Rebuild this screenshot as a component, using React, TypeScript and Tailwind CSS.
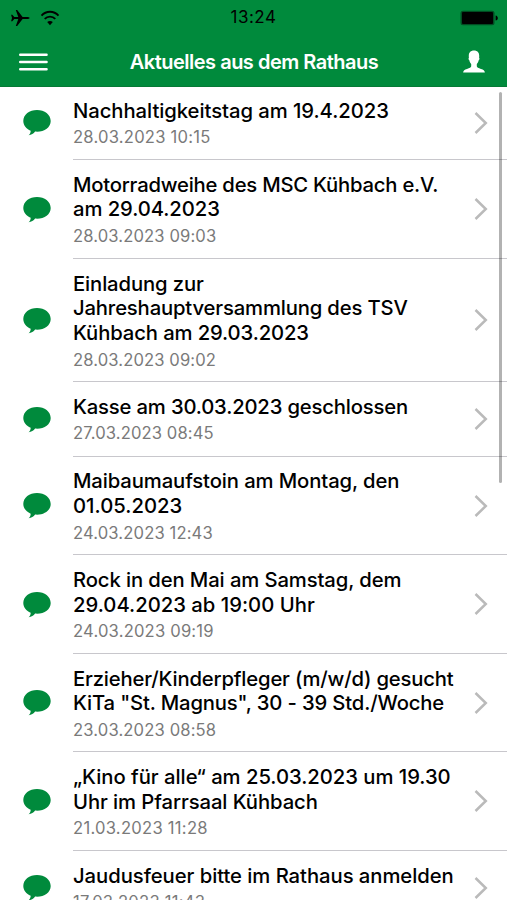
type Line = { text: string; tracking: string };
type Item = { height: string; pad: string; lines: Line[]; date: string; dateTracking: string };

const items: Item[] = [
  {
    height: "h-[74px]",
    pad: "pt-[13px]",
    lines: [{ text: "Nachhaltigkeitstag am 19.4.2023", tracking: "tracking-[-0.05px]" }],
    date: "28.03.2023 10:15",
    dateTracking: "tracking-[0.22px]",
  },
  {
    height: "h-[99px]",
    pad: "pt-[12.500px]",
    lines: [
      { text: "Motorradweihe des MSC Kühbach e.V.", tracking: "tracking-[-0.22px]" },
      { text: "am 29.04.2023", tracking: "tracking-[-0.07px]" },
    ],
    date: "28.03.2023 09:03",
    dateTracking: "tracking-[0.12px]",
  },
  {
    height: "h-[123px]",
    pad: "pt-[12.500px]",
    lines: [
      { text: "Einladung zur", tracking: "tracking-[-0.12px]" },
      { text: "Jahreshauptversammlung des TSV", tracking: "tracking-[-0.16px]" },
      { text: "Kühbach am 29.03.2023", tracking: "tracking-[-0.12px]" },
    ],
    date: "28.03.2023 09:02",
    dateTracking: "tracking-[0.11px]",
  },
  {
    height: "h-[75px]",
    pad: "pt-[13px]",
    lines: [{ text: "Kasse am 30.03.2023 geschlossen", tracking: "tracking-[-0.17px]" }],
    date: "27.03.2023 08:45",
    dateTracking: "tracking-[0.12px]",
  },
  {
    height: "h-[98px]",
    pad: "pt-[12.400px]",
    lines: [
      { text: "Maibaumaufstoin am Montag, den", tracking: "tracking-[-0.11px]" },
      { text: "01.05.2023", tracking: "tracking-[0.02px]" },
    ],
    date: "24.03.2023 12:43",
    dateTracking: "tracking-[0.13px]",
  },
  {
    height: "h-[99px]",
    pad: "pt-[13px]",
    lines: [
      { text: "Rock in den Mai am Samstag, dem", tracking: "tracking-[-0.11px]" },
      { text: "29.04.2023 ab 19:00 Uhr", tracking: "tracking-[0.01px]" },
    ],
    date: "24.03.2023 09:19",
    dateTracking: "tracking-[0.19px]",
  },
  {
    height: "h-[98px]",
    pad: "pt-[12.500px]",
    lines: [
      { text: "Erzieher/Kinderpfleger (m/w/d) gesucht", tracking: "tracking-[-0.17px]" },
      { text: 'KiTa "St. Magnus", 30 - 39 Std./Woche', tracking: "tracking-[-0.15px]" },
    ],
    date: "23.03.2023 08:58",
    dateTracking: "tracking-[0.14px]",
  },
  {
    height: "h-[99px]",
    pad: "pt-[13px]",
    lines: [
      { text: "„Kino für alle“ am 25.03.2023 um 19.30", tracking: "tracking-[-0.03px]" },
      { text: "Uhr im Pfarrsaal Kühbach", tracking: "tracking-[-0.08px]" },
    ],
    date: "21.03.2023 11:28",
    dateTracking: "tracking-[0.26px]",
  },
  {
    height: "h-[74px]",
    pad: "pt-[13px]",
    lines: [{ text: "Jaudusfeuer bitte im Rathaus anmelden", tracking: "tracking-[-0.05px]" }],
    date: "17.03.2023 11:43",
    dateTracking: "tracking-[0.24px]",
  },
];

function Airplane() {
  return (
    <svg width="20" height="18" viewBox="0 0 20 18" className="shrink-0">
      <path
        d="M19.6 9c0 .8-1.400 1.100-2.600 1.100h-4.400L7.200 17H5.800l2.500-6.900H4.300L2.300 12.200H1.100L2 9l-.9-3.200h1.200l2 2.100h4L5.800 1h1.400l5.400 6.900H17c1.200 0 2.600.3 2.600 1.100z"
        fill="#000"
      />
    </svg>
  );
}

function Wifi() {
  return (
    <svg width="20" height="16" viewBox="0 0 20 16" className="shrink-0" fill="none" stroke="#000">
      <path d="M1.500 5.600C6.200.5 13.800.5 18.500 5.600" strokeWidth="1.900" />
      <path d="M4.700 8.900c3-3.100 7.600-3.100 10.600 0" strokeWidth="1.900" />
      <path d="M10 15.200 7.200 12.100c1.600-1.500 4-1.500 5.600 0z" fill="#000" stroke="none" />
    </svg>
  );
}

function Battery() {
  return (
    <svg width="39" height="16" viewBox="0 0 39 16" className="shrink-0">
      <rect x="0.500" y="0.700" width="34" height="14.500" rx="2.500" fill="#000" fillOpacity="0.45" />
      <rect x="2" y="2" width="31" height="12" rx="1" fill="#000" />
      <path d="M35.600 5.400c1.500.3 2.200 1.300 2.200 2.600s-.7 2.300-2.200 2.600z" fill="#000" />
    </svg>
  );
}

function Hamburger() {
  return (
    <svg width="29" height="18" viewBox="0 0 29 18" className="block shrink-0">
      <path
        d="M1.200 1.800h26.400M1.200 9h26.400M1.200 16.200h26.400"
        fill="none"
        stroke="#fff"
        strokeWidth="2.400"
        strokeLinecap="round"
      />
    </svg>
  );
}

function Person() {
  return (
    <svg width="22" height="23" viewBox="0 0 22 23" className="shrink-0">
      <path
        d="M11 .5c3.400 0 5.200 2.100 5.200 5.300 0 .8 0 1.400-.1 1.900.6.400.4 1.900-.4 2.500-.4 1.700-1.100 2.900-1.900 3.700v2.300c0 1.200 1.700 1.900 4.200 2.700 2.500.8 3.600 1.600 3.900 3.500H.1c.3-1.900 1.400-2.700 3.900-3.500 2.500-.8 4.200-1.500 4.200-2.700v-2.300c-.8-.8-1.500-2-1.900-3.700-.8-.6-1-2.100-.4-2.500-.1-.5-.1-1.100-.1-1.900C5.800 2.600 7.600.5 11 .5z"
        fill="#fff"
      />
    </svg>
  );
}

function Bubble() {
  return (
    <svg width="28" height="26" viewBox="0 0 28 26" className="shrink-0">
      <path
        d="M14 0C21.600 0 27.700 4.700 27.700 10.900S21.600 21.700 14 21.700c-.7 0-1.300 0-1.900-.1-1.500 2-3.700 3.500-6.500 3.600 1.200-1 2-2.500 2.100-4.500C3.300 18.700.3 15.100.3 10.900.3 4.700 6.400 0 14 0z"
        fill="#008a3c"
      />
    </svg>
  );
}

function Chevron() {
  return (
    <svg width="14" height="22" viewBox="0 0 14 22" className="shrink-0">
      <path d="M1.500 1 11.800 11 1.500 21" fill="none" stroke="#bababa" strokeWidth="2.500" />
    </svg>
  );
}

export default function App() {
  return (
    <div className="relative flex h-[900px] w-[507px] flex-col overflow-hidden bg-white font-['Inter','Liberation_Sans',sans-serif]">
      <header className="flex h-[87px] shrink-0 flex-col border-b border-[#067a36] bg-[#008a3c]">
        <div className="grid h-[35px] grid-cols-3 items-center">
          <div className="flex items-center gap-[10px] pl-[10px]">
            <Airplane />
            <Wifi />
          </div>
          <time className="text-center text-[17px] leading-none tracking-[0.5px] text-black">13:24</time>
          <div className="flex justify-end pr-[8px]">
            <Battery />
          </div>
        </div>
        <div className="flex h-[51px] items-center justify-between pt-[2px] pr-[22px] pl-[19px]">
          <button aria-label="Menü">
            <Hamburger />
          </button>
          <h1 className="-ml-[3px] text-[20px] leading-6 font-semibold tracking-[-0.5px] whitespace-nowrap text-white">
            Aktuelles aus dem Rathaus
          </h1>
          <button aria-label="Profil">
            <Person />
          </button>
        </div>
      </header>
      <ul className="-mt-px flex flex-col">
        {items.map((item) => (
          <li key={item.date} className={`flex shrink-0 pl-[23px] ${item.height}`}>
            <div className="flex w-[50px] shrink-0 items-center">
              <Bubble />
            </div>
            <div className="flex min-w-0 flex-1 border-b border-[#c8c7cc]">
              <div className={`flex-1 ${item.pad}`}>
                {item.lines.map((line) => (
                  <div
                    key={line.text}
                    className={`text-[20.250px] leading-[24.900px] font-medium whitespace-nowrap text-black ${line.tracking}`}
                  >
                    {line.text}
                  </div>
                ))}
                <div className={`mt-[1.300px] text-[16.600px] leading-[25px] text-[#7a7a7a] ${item.dateTracking}`}>
                  {item.date}
                </div>
              </div>
              <div className="flex items-center pr-[19px]">
                <Chevron />
              </div>
            </div>
          </li>
        ))}
      </ul>
      <div className="absolute top-[92px] right-[5px] h-[391px] w-[3px] rounded-full bg-black/30" />
    </div>
  );
}
